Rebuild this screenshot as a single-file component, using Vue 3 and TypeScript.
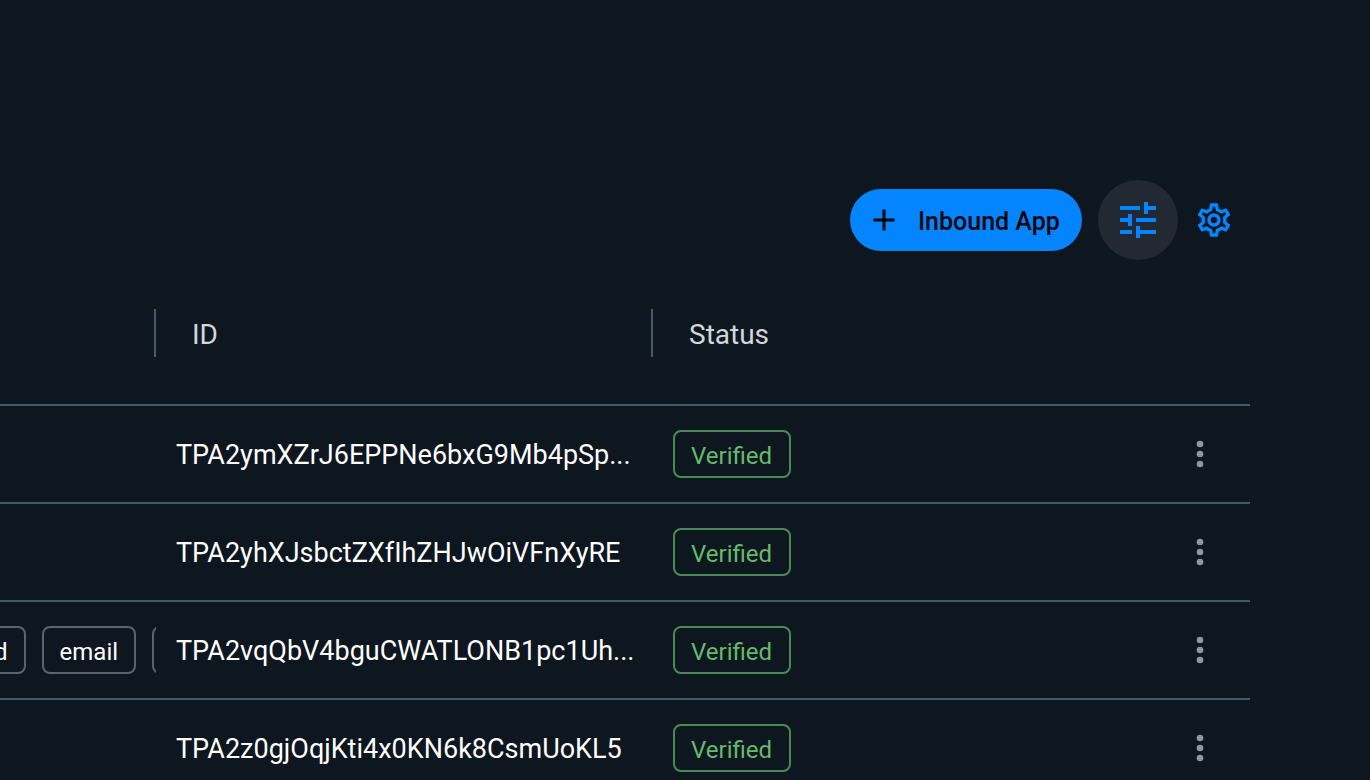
<script setup lang="ts">
interface AppRow {
  id: string
  scopes: string[]
  status: string
}

const rows: AppRow[] = [
  { id: 'TPA2ymXZrJ6EPPNe6bxG9Mb4pSp...', scopes: [], status: 'Verified' },
  { id: 'TPA2yhXJsbctZXfIhZHJwOiVFnXyRE', scopes: [], status: 'Verified' },
  { id: 'TPA2vqQbV4bguCWATLONB1pc1Uh...', scopes: ['d', 'email', ''], status: 'Verified' },
  { id: 'TPA2z0gjOqjKti4x0KN6k8CsmUoKL5', scopes: [], status: 'Verified' },
]
</script>

<template>
  <main class="page">
    <div class="toolbar">
      <button class="primary" type="button">
        <svg class="plus" viewBox="0 0 24 24" aria-hidden="true">
          <path d="M19 13h-6v6h-2v-6H5v-2h6V5h2v6h6v2z" />
        </svg>
        <span class="primary-label">Inbound App</span>
      </button>
      <button class="round" type="button" aria-label="Filters">
        <svg class="tune" viewBox="0 0 24 24" aria-hidden="true">
          <path d="M3 17v2h6v-2H3zM3 5v2h10V5H3zm10 16v-2h8v-2h-8v-2h-2v6h2zM7 9v2H3v2h4v2h2V9H7zm14 4v-2H11v2h10zm-6-4h2V7h4V5h-4V3h-2v6z" />
        </svg>
      </button>
      <button class="plain" type="button" aria-label="Settings">
        <svg class="gear" viewBox="0 0 24 24" aria-hidden="true">
          <path d="M19.43 12.98c.04-.32.07-.64.07-.98 0-.34-.03-.66-.07-.98l2.11-1.65c.19-.15.24-.42.12-.64l-2-3.46c-.09-.16-.26-.25-.44-.25-.06 0-.12.01-.17.03l-2.49 1c-.52-.4-1.08-.73-1.69-.98l-.38-2.65C14.46 2.18 14.25 2 14 2h-4c-.25 0-.46.18-.49.42l-.38 2.65c-.61.25-1.17.59-1.69.98l-2.49-1c-.06-.02-.12-.03-.18-.03-.17 0-.34.09-.43.25l-2 3.46c-.13.22-.07.49.12.64l2.11 1.65c-.04.32-.07.65-.07.98 0 .33.03.66.07.98l-2.11 1.65c-.19.15-.24.42-.12.64l2 3.46c.09.16.26.25.44.25.06 0 .12-.01.17-.03l2.49-1c.52.4 1.08.73 1.69.98l.38 2.65c.03.24.24.42.49.42h4c.25 0 .46-.18.49-.42l.38-2.65c.61-.25 1.17-.59 1.69-.98l2.49 1c.06.02.12.03.18.03.17 0 .34-.09.43-.25l2-3.46c.12-.22.07-.49-.12-.64l-2.11-1.65zm-1.98-1.71c.04.31.05.52.05.73 0 .21-.02.43-.05.73l-.14 1.13.89.7 1.08.84-.7 1.21-1.27-.51-1.04-.42-.9.68c-.43.32-.84.56-1.25.73l-1.06.43-.16 1.13-.2 1.35h-1.4l-.19-1.35-.16-1.13-1.06-.43c-.43-.18-.83-.41-1.23-.71l-.91-.7-1.06.43-1.27.51-.7-1.21 1.08-.84.89-.7-.14-1.13c-.03-.31-.05-.54-.05-.74s.02-.43.05-.73l.14-1.13-.89-.7-1.08-.84.7-1.21 1.27.51 1.04.42.9-.68c.43-.32.84-.56 1.25-.73l1.06-.43.16-1.13.2-1.35h1.39l.19 1.35.16 1.13 1.06.43c.43.18.83.41 1.23.71l.91.7 1.06-.43 1.27-.51.7 1.21-1.07.85-.89.7.14 1.13zM12 8c-2.21 0-4 1.79-4 4s1.79 4 4 4 4-1.79 4-4-1.79-4-4-4zm0 6c-1.1 0-2-.9-2-2s.9-2 2-2 2 .9 2 2-.9 2-2 2z" />
        </svg>
      </button>
    </div>

    <table class="grid">
      <colgroup>
        <col class="col-scopes" />
        <col class="col-id" />
        <col />
        <col class="col-actions" />
      </colgroup>
      <thead>
        <tr>
          <th scope="col" aria-label="Scopes"><div class="head divided"></div></th>
          <th scope="col"><div class="head divided">ID</div></th>
          <th scope="col"><div class="head">Status</div></th>
          <th scope="col" aria-label="Actions"></th>
        </tr>
      </thead>
      <tbody>
        <tr v-for="row in rows" :key="row.id">
          <td>
            <div v-if="row.scopes.length" class="scopes">
              <span v-for="(scope, i) in row.scopes" :key="i" class="chip">{{ scope }}</span>
            </div>
          </td>
          <td class="id">{{ row.id }}</td>
          <td class="status"><span class="chip verified">{{ row.status }}</span></td>
          <td class="actions">
            <button class="plain" type="button" aria-label="Row actions">
              <svg class="more" viewBox="0 0 24 24" aria-hidden="true">
                <circle cx="12" cy="6" r="2" />
                <circle cx="12" cy="12" r="2" />
                <circle cx="12" cy="18" r="2" />
              </svg>
            </button>
          </td>
        </tr>
      </tbody>
    </table>
  </main>
</template>

<style>
body {
  margin: 0;
  background: #0e1620;
  overflow: hidden;
}
</style>

<style scoped>
.page {
  box-sizing: border-box;
  height: 100vh;
  overflow: hidden;
  padding: 180px 120px 0 0;
  background: #0e1620;
  color: #ffffff;
  font-family: Roboto, "Liberation Sans", sans-serif;
  font-size: 28px;
}
button {
  border: 0;
  padding: 0;
  background: none;
  font-family: inherit;
  cursor: pointer;
}
svg {
  display: block;
  fill: currentColor;
}
.toolbar {
  display: flex;
  justify-content: flex-end;
  align-items: center;
  gap: 16px;
  padding-right: 16px;
  margin-bottom: 2px;
}
.primary {
  display: flex;
  align-items: center;
  gap: 16px;
  height: 62px;
  min-width: 232px;
  padding: 0 20px 0 16px;
  border-radius: 31px;
  background: #0485ff;
  color: #020508;
  font-size: 25px;
  font-weight: 500;
}
.primary-label {
  padding-top: 2px;
}
.plus {
  width: 36px;
  height: 36px;
}
.round {
  display: grid;
  place-items: center;
  width: 80px;
  height: 80px;
  border-radius: 50%;
  background: #222932;
  color: #0485ff;
}
.tune {
  width: 48px;
  height: 48px;
}
.plain {
  color: #0485ff;
}
.gear,
.more {
  width: 40px;
  height: 40px;
}
.grid {
  width: 100%;
  table-layout: fixed;
  border-collapse: separate;
  border-spacing: 0;
}
.col-scopes {
  width: 156px;
}
.col-id {
  width: 497px;
}
.col-actions {
  width: 100px;
}
th,
td {
  box-sizing: border-box;
  padding: 0;
  border-bottom: 2px solid #455a67;
  text-align: left;
  vertical-align: middle;
}
th {
  height: 144px;
  color: #d3d7dc;
  font-weight: 400;
}
td {
  height: 98px;
}
.head {
  box-sizing: border-box;
  height: 48px;
  padding-left: 36px;
  line-height: 52px;
}
.divided {
  border-right: 2px solid #455a67;
}
.id,
.status {
  padding-left: 20px;
  white-space: nowrap;
}
.id {
  padding-top: 2px;
  font-size: 27px;
}
.scopes {
  display: flex;
  gap: 16px;
  overflow: hidden;
}
.chip {
  box-sizing: border-box;
  display: inline-block;
  flex: none;
  height: 48px;
  padding: 0 16px;
  border: 2px solid #5d6268;
  border-radius: 8px;
  font-size: 24px;
  line-height: 48px;
  vertical-align: middle;
}
.scopes .chip:first-child {
  margin-left: -24px;
}
.verified {
  min-width: 118px;
  border-color: #4b8a55;
  color: #66bb6a;
}
.actions .plain {
  display: block;
  margin: 0 auto;
  color: #92969c;
}
</style>
